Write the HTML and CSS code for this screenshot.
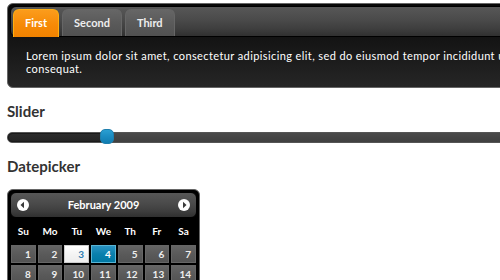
FILE: index.html
```html
<!DOCTYPE html>
<html>
<head>
<meta charset="utf-8">
<title>jQuery UI Darkness</title>
<link rel="stylesheet" href="styles.css">
</head>
<body>
<div class="page">
  <div class="tabs">
    <ul class="tab-nav">
      <li class="tab active">First</li>
      <li class="tab">Second</li>
      <li class="tab">Third</li>
    </ul>
    <div class="panel">Lorem ipsum dolor sit amet, consectetur adipisicing elit, sed do eiusmod tempor incididunt ut labore et dolore magna aliqua. Ut enim ad minim veniam, quis nostrud exercitation ullamco laboris nisi ut aliquip ex ea commodo<br>consequat.</div>
  </div>

  <h2 class="demo-header">Slider</h2>
  <div class="slider">
    <div class="slider-range" style="width:96px"></div>
    <span class="slider-handle" style="left:92px"></span>
  </div>

  <h2 class="demo-header">Datepicker</h2>
  <div class="datepicker">
    <div class="dp-header">
      <span class="dp-nav"><svg width="12" height="12" viewBox="0 0 12 12"><circle cx="6" cy="6" r="6" fill="#fff"/><polygon points="3.5,6 7,2.8 7,9.2" fill="#3a3a3a"/></svg></span>
      <span class="dp-title">February 2009</span>
      <span class="dp-nav"><svg width="12" height="12" viewBox="0 0 12 12"><circle cx="6" cy="6" r="6" fill="#fff"/><polygon points="8.5,6 5,2.8 5,9.2" fill="#3a3a3a"/></svg></span>
    </div>
    <table class="dp-calendar">
      <thead>
        <tr><th>Su</th><th>Mo</th><th>Tu</th><th>We</th><th>Th</th><th>Fr</th><th>Sa</th></tr>
      </thead>
      <tbody>
        <tr><td><span class="day">1</span></td><td><span class="day">2</span></td><td><span class="day today">3</span></td><td><span class="day selected">4</span></td><td><span class="day">5</span></td><td><span class="day">6</span></td><td><span class="day">7</span></td></tr>
        <tr><td><span class="day">8</span></td><td><span class="day">9</span></td><td><span class="day">10</span></td><td><span class="day">11</span></td><td><span class="day">12</span></td><td><span class="day">13</span></td><td><span class="day">14</span></td></tr>
        <tr><td><span class="day">15</span></td><td><span class="day">16</span></td><td><span class="day">17</span></td><td><span class="day">18</span></td><td><span class="day">19</span></td><td><span class="day">20</span></td><td><span class="day">21</span></td></tr>
        <tr><td><span class="day">22</span></td><td><span class="day">23</span></td><td><span class="day">24</span></td><td><span class="day">25</span></td><td><span class="day">26</span></td><td><span class="day">27</span></td><td><span class="day">28</span></td></tr>
      </tbody>
    </table>
  </div>
</div>
</body>
</html>
```

FILE: styles.css
```css
html, body {
  margin: 0;
  padding: 0;
  overflow: hidden;
  background: #fff;
}

body {
  font-family: Lato, "Liberation Sans", Arial, sans-serif;
  font-size: 11px;
}

.page {
  width: 1250px;
  padding: 3px 0 0 7px;
}

/* Tabs */
.tabs {
  border: 1px solid #666;
  border-radius: 6px;
  padding: 2px;
  background: #000 linear-gradient(to bottom, #000 0%, #262626 100%) no-repeat left bottom / 100% 100px;
  color: #fff;
}

.tab-nav {
  display: flex;
  align-items: flex-end;
  margin: 0;
  padding: 2px 2px 0;
  list-style: none;
  border: 1px solid #000;
  border-radius: 6px;
  background: linear-gradient(to bottom, #575757 0%, #4a4a4a 45%, #3e3e3e 75%, #303030 100%);
}

.tab {
  margin: 0 3px 0 0;
  padding: 5px 11px 6px;
  line-height: 15px;
  font-weight: bold;
  color: #eee;
  border: 1px solid #666;
  border-bottom: 0;
  border-radius: 6px 6px 0 0;
  background: linear-gradient(to bottom, #666 0%, #5a5a5a 50%, #515151 100%);
}

.tab.active {
  padding-bottom: 7px;
  margin-bottom: -1px;
  color: #fff;
  border-color: #ffaf0f;
  background: linear-gradient(to bottom, #fb9c1c 0%, #f68a06 55%, #f08200 100%);
}

.panel {
  padding: 12px 15px 10px 16px;
  line-height: 13px;
  letter-spacing: 0.4px;
  color: #fff;
}

/* Headings */
.demo-header {
  margin: 13px 0 0;
  font-size: 15px;
  line-height: 20px;
  font-weight: bold;
  color: #333;
}

/* Slider */
.slider {
  position: relative;
  display: flex;
  height: 9px;
  margin-top: 11px;
  border: 1px solid #555;
  border-radius: 5px;
  background: linear-gradient(to bottom, #4a4a4a 0%, #444 50%, #404040 100%);
}

.slider-range {
  height: 100%;
  border-radius: 5px 0 0 5px;
  background: linear-gradient(to bottom, #2c2c2c 0%, #232323 100%);
  box-shadow: inset 0 0 0 1px #1a1a1a;
}

.slider-handle {
  position: absolute;
  top: -4px;
  width: 12px;
  height: 13px;
  border: 1px solid #1f7fae;
  border-radius: 5px;
  background: linear-gradient(to bottom, #2a9fd2 0%, #1b8cc2 50%, #117cb0 100%);
}

/* Datepicker */
.datepicker {
  width: 187px;
  margin-top: 13px;
  padding: 2px 2px 0;
  border: 1px solid #666;
  border-radius: 6px;
  background: #000;
  color: #fff;
}

.dp-header {
  display: flex;
  align-items: center;
  justify-content: space-between;
  height: 20px;
  padding: 2px 6px;
  border: 1px solid #000;
  border-radius: 6px;
  background: linear-gradient(to bottom, #575757 0%, #4a4a4a 45%, #3e3e3e 75%, #303030 100%);
}

.dp-nav {
  display: flex;
  width: 12px;
  height: 12px;
}

.dp-title {
  font-weight: bold;
  color: #fff;
  line-height: 20px;
}

.dp-calendar {
  width: 100%;
  border-collapse: collapse;
  font-size: 10px;
  margin: 0;
}

.dp-calendar th {
  padding: 7px 3px 6px;
  line-height: 13px;
  font-weight: bold;
  text-align: center;
  color: #fff;
}

.dp-calendar td {
  padding: 1px;
}

.day {
  display: block;
  padding: 2px 4px 2px 2px;
  line-height: 12px;
  text-align: right;
  font-weight: bold;
  color: #eee;
  border: 1px solid #666;
  background: linear-gradient(to bottom, #656565 0%, #5a5a5a 50%, #535353 100%);
}

.day.today {
  color: #2e7db2;
  border-color: #ccc;
  background: linear-gradient(to bottom, #fff 0%, #f4f4f4 50%, #ededed 100%);
}

.day.selected {
  color: #fff;
  border-color: #59b4d4;
  background: linear-gradient(to bottom, #2a93c2 0%, #0a80ad 50%, #0078a3 100%);
}
```
